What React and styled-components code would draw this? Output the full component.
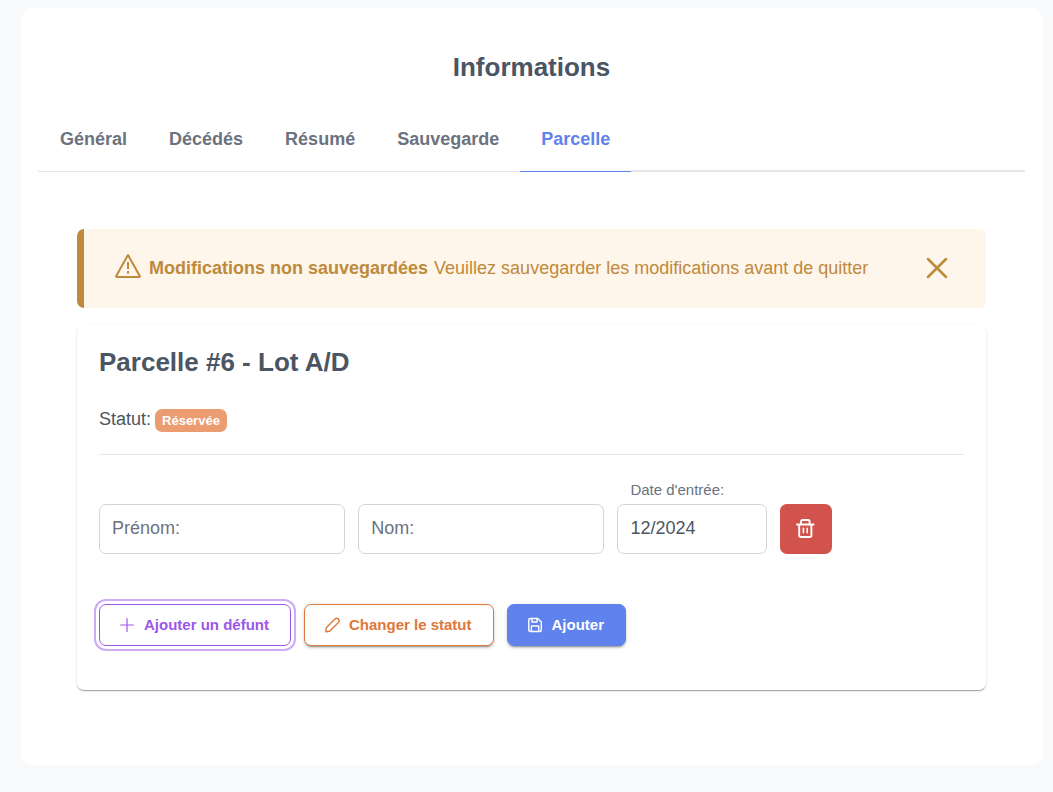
import React, { useState } from "react";
import styled, { createGlobalStyle, css } from "styled-components";

const GlobalStyle = createGlobalStyle`
  *, *::before, *::after { box-sizing: border-box; }
  body {
    margin: 0;
    background: #f8fafc;
    color: #4b5563;
    font-family: "Liberation Sans", Arial, sans-serif;
    font-size: 18px;
    line-height: 22px;
  }
  button, input { font: inherit; }
`;

const Page = styled.main`
  padding: 8px 10px 27px 21px;
`;

const Surface = styled.section`
  padding: 43px 18px 75px 17px;
  border-radius: 12px;
  background: #ffffff;
`;

const Title = styled.h1`
  margin: 0;
  font-size: 26px;
  line-height: 32px;
  text-align: center;
`;

const TabList = styled.div`
  display: flex;
  margin-top: 23px;
  padding-left: 1px;
  border-bottom: 2px solid #e5e7eb;
`;

const Tab = styled.button`
  margin: 0 0 -2px;
  padding: 22px 21px 43px;
  height: 66px;
  border: 0;
  border-bottom: 1px solid ${(p) => (p.$active ? "#5f82ec" : "#e5e7eb")};
  background: #ffffff;
  color: ${(p) => (p.$active ? "#5f82ec" : "#6b7280")};
  font-weight: 700;
  line-height: 22px;
  cursor: pointer;
`;

const Panel = styled.div`
  padding: 57px 39px 0;
`;

const Message = styled.div`
  display: flex;
  align-items: center;
  min-height: 79px;
  padding: 20px 32px 22px 31px;
  border-left: 7px solid #be8a3b;
  border-radius: 7px;
  background: #fef5eb;
  color: #be8a3b;
`;

const MessageIcon = styled.span`
  display: flex;
  padding-bottom: 4px;
`;

const MessageText = styled.p`
  margin: 0 auto 0 8px;

  strong { margin-right: 6px; }
`;

const CloseButton = styled.button`
  display: grid;
  place-items: center;
  width: 34px;
  height: 34px;
  padding: 0;
  border: 0;
  border-radius: 50%;
  background: transparent;
  color: inherit;
  cursor: pointer;
`;

const Card = styled.article`
  margin-top: 17px;
  padding: 21px 22px 44px;
  border-radius: 7px;
  background: #ffffff;
  box-shadow: 0 2px 1px -1px rgba(0, 0, 0, 0.2), 0 1px 1px rgba(0, 0, 0, 0.14),
    0 1px 3px rgba(0, 0, 0, 0.12);
`;

const CardTitle = styled.h2`
  margin: 0;
  font-size: 26px;
  line-height: 32px;
`;

const Status = styled.div`
  display: flex;
  align-items: flex-end;
  gap: 4px;
  margin-top: 29px;
  padding-bottom: 22px;
  border-bottom: 1px solid #e5e7eb;
`;

const StatusLabel = styled.span`
  line-height: 24px;
  padding-bottom: 1px;
`;

const Badge = styled.span`
  padding: 0 7px;
  border-radius: 7px;
  background: #eb9d71;
  color: #ffffff;
  font-size: 13px;
  font-weight: 700;
  line-height: 23px;
`;

const EntryForm = styled.form`
  margin: 0;
`;

const FieldRow = styled.div`
  display: grid;
  grid-template-columns: 33fr 33fr 20fr 52px 16fr;
  align-items: end;
  gap: 13px;
  padding-top: 25px;
`;

const Field = styled.div`
  min-width: 0;
`;

const FieldLabel = styled.label`
  display: block;
  padding-left: 13px;
  margin-bottom: 4px;
  color: #6b7280;
  font-size: 15px;
  line-height: 20px;
`;

const TextInput = styled.input`
  display: block;
  width: 100%;
  height: 50px;
  padding: 0 12px 2px;
  border: 1px solid #d1d5db;
  border-radius: 7px;
  background: #ffffff;
  color: #4b5563;

  &::placeholder { color: #6b7280; opacity: 1; }
`;

const DeleteButton = styled.button`
  display: grid;
  place-items: center;
  height: 50px;
  padding: 0;
  border: 0;
  border-radius: 7px;
  background: #d2524c;
  color: #ffffff;
  cursor: pointer;
`;

const Actions = styled.div`
  display: flex;
  gap: 13px;
  margin-top: 50px;
`;

const variants = {
  focused: css`
    border: 1px solid #9b57e8;
    background: #ffffff;
    color: #9b57e8;
    box-shadow: 0 0 0 3px #ffffff, 0 0 0 5px #cfaaf5;
  `,
  outlined: css`
    border: 1px solid #de7737;
    background: #ffffff;
    color: #de7737;
  `,
  solid: css`
    border: 1px solid #5f82ec;
    background: #5f82ec;
    color: #ffffff;
  `,
};

const ActionButton = styled.button`
  display: flex;
  align-items: center;
  gap: 8px;
  height: 42px;
  padding: 0 21px 0 20px;
  border-radius: 7px;
  font-size: 15px;
  font-weight: 700;
  line-height: 20px;
  cursor: pointer;
  box-shadow: 0 3px 1px -2px rgba(0, 0, 0, 0.2), 0 2px 2px rgba(0, 0, 0, 0.14),
    0 1px 5px rgba(0, 0, 0, 0.12);
  ${(p) => variants[p.$variant]}
`;

const Glyph = ({ size = 16, width = 1, children }) => (
  <svg
    width={size}
    height={size}
    viewBox={`0 0 ${size} ${size}`}
    fill="none"
    stroke="currentColor"
    strokeWidth={width}
    strokeLinecap="round"
    strokeLinejoin="round"
    aria-hidden="true"
  >
    {children}
  </svg>
);

const WarningIcon = () => (
  <Glyph size={26} width={2}>
    <path d="M13 2 L1.2 23 Q.9 24 2 24 H24 Q25.1 24 24.8 23 Z" />
    <path d="M13 9V16M13 18V20.5" strokeLinecap="butt" />
  </Glyph>
);

const CloseIcon = () => (
  <Glyph size={22} width={2.5}>
    <path d="M2 2L20 20M20 2L2 20" />
  </Glyph>
);

const PlusIcon = () => (
  <Glyph width={1.2}>
    <path d="M7 1.5V14.5M.6 8H13.4" />
  </Glyph>
);

const PencilIcon = () => (
  <Glyph width={1.4}>
    <path d="M.8 14.8L1.2 10.8L10 2Q11.7.4 13.4 2Q15 3.7 13.4 5.4L4.6 14.2Z" />
  </Glyph>
);

const SaveIcon = () => (
  <Glyph width={1.4}>
    <path d="M2.4 1.5H9.8L13.3 5V13Q13.3 14.5 11.8 14.5H2.3Q.8 14.5 .8 13V3Q.8 1.5 2.4 1.5Z" />
    <path d="M4 1.8V5H9V1.8M3.4 14.2V9H10.7V14.2" />
  </Glyph>
);

const TrashIcon = () => (
  <Glyph size={20} width={1.9}>
    <path d="M1 5.5H17.6M3.2 5.5V16.2Q3.2 18 5 18H13.6Q15.4 18 15.4 16.2V5.5" />
    <path d="M5 5.3V2.6Q5 1 6.6 1H12Q13.6 1 13.6 2.6V5.3" />
    <path d="M7.4 9.3V13.8M11.2 9.3V13.8" strokeWidth="1.6" />
  </Glyph>
);

const TABS = ["Général", "Décédés", "Résumé", "Sauvegarde", "Parcelle"];

export default function App() {
  const [active, setActive] = useState("Parcelle");

  return (
    <>
      <GlobalStyle />
      <Page>
        <Surface>
          <Title>Informations</Title>
          <TabList role="tablist">
            {TABS.map((name) => (
              <Tab
                key={name}
                type="button"
                role="tab"
                aria-selected={name === active}
                $active={name === active}
                onClick={() => setActive(name)}
              >
                {name}
              </Tab>
            ))}
          </TabList>
          <Panel role="tabpanel">
            <Message role="alert">
              <MessageIcon>
                <WarningIcon />
              </MessageIcon>
              <MessageText>
                <strong>Modifications non sauvegardées</strong>
                Veuillez sauvegarder les modifications avant de quitter
              </MessageText>
              <CloseButton type="button" aria-label="Fermer">
                <CloseIcon />
              </CloseButton>
            </Message>
            <Card>
              <CardTitle>Parcelle #6 - Lot A/D</CardTitle>
              <Status>
                <StatusLabel>Statut:</StatusLabel>
                <Badge>Réservée</Badge>
              </Status>
              <EntryForm onSubmit={(e) => e.preventDefault()}>
                <FieldRow>
                  <Field>
                    <TextInput aria-label="Prénom" placeholder="Prénom:" />
                  </Field>
                  <Field>
                    <TextInput aria-label="Nom" placeholder="Nom:" />
                  </Field>
                  <Field>
                    <FieldLabel htmlFor="entry-date">Date d'entrée:</FieldLabel>
                    <TextInput id="entry-date" defaultValue="12/2024" />
                  </Field>
                  <DeleteButton type="button" aria-label="Supprimer">
                    <TrashIcon />
                  </DeleteButton>
                </FieldRow>
                <Actions>
                  <ActionButton type="button" $variant="focused">
                    <PlusIcon />
                    Ajouter un défunt
                  </ActionButton>
                  <ActionButton type="button" $variant="outlined">
                    <PencilIcon />
                    Changer le statut
                  </ActionButton>
                  <ActionButton type="submit" $variant="solid">
                    <SaveIcon />
                    Ajouter
                  </ActionButton>
                </Actions>
              </EntryForm>
            </Card>
          </Panel>
        </Surface>
      </Page>
    </>
  );
}
